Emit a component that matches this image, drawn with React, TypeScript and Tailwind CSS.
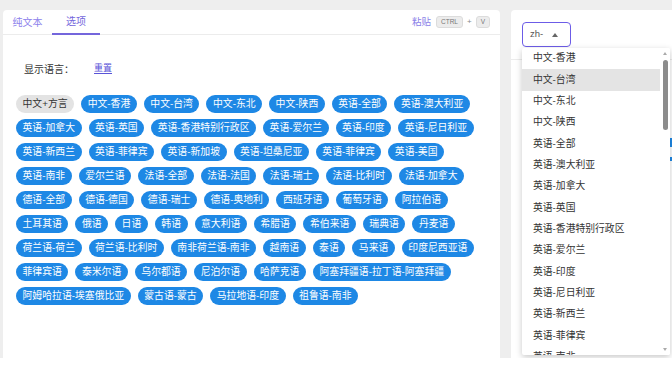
import React from 'react';

const rows: string[][] = [
  ['中文+方言', '中文-香港', '中文-台湾', '中文-东北', '中文-陕西', '英语-全部', '英语-澳大利亚'],
  ['英语-加拿大', '英语-英国', '英语-香港特别行政区', '英语-爱尔兰', '英语-印度', '英语-尼日利亚'],
  ['英语-新西兰', '英语-菲律宾', '英语-新加坡', '英语-坦桑尼亚', '英语-菲律宾', '英语-美国'],
  ['英语-南非', '爱尔兰语', '法语-全部', '法语-法国', '法语-瑞士', '法语-比利时', '法语-加拿大'],
  ['德语-全部', '德语-德国', '德语-瑞士', '德语-奥地利', '西班牙语', '葡萄牙语', '阿拉伯语'],
  ['土耳其语', '俄语', '日语', '韩语', '意大利语', '希腊语', '希伯来语', '瑞典语', '丹麦语'],
  ['荷兰语-荷兰', '荷兰语-比利时', '南非荷兰语-南非', '越南语', '泰语', '马来语', '印度尼西亚语'],
  ['菲律宾语', '泰米尔语', '乌尔都语', '尼泊尔语', '哈萨克语', '阿塞拜疆语-拉丁语-阿塞拜疆'],
  ['阿姆哈拉语-埃塞俄比亚', '蒙古语-蒙古', '马拉地语-印度', '祖鲁语-南非'],
];

const options = [
  '中文-香港', '中文-台湾', '中文-东北', '中文-陕西', '英语-全部', '英语-澳大利亚', '英语-加拿大',
  '英语-英国', '英语-香港特别行政区', '英语-爱尔兰', '英语-印度', '英语-尼日利亚', '英语-新西兰',
  '英语-菲律宾', '英语-南非',
];

function Kbd({ children }: { children: React.ReactNode }) {
  return (
    <span className="h-[12px] px-[4px] flex items-center rounded-[3px] bg-[#ececec] border border-[#dcdcdc] text-[6.5px] text-[#777] leading-none">
      {children}
    </span>
  );
}

export default function App() {
  return (
    <div className="h-[358px] w-[672px] overflow-hidden bg-[#eeeeee] flex pl-[3px] pt-[10px] gap-[11px] font-['Liberation_Sans','Noto_Sans_CJK_SC',sans-serif]">
      {/* left card */}
      <div className="w-[497px] shrink-0 bg-white rounded-t-[4px] flex flex-col">
        <div className="h-[25px] border-b border-[#ececec] flex items-stretch justify-between pr-[10px]">
          <div className="flex items-stretch">
            <div className="w-[49px] flex items-center justify-center text-[10px] text-[#8d82ec]">纯文本</div>
            <div className="w-[48px] flex items-center justify-center text-[10px] text-[#7466dc] border-b-2 border-[#7466dc] -mb-px">
              选项
            </div>
          </div>
          <div className="flex items-center gap-[4px]">
            <span className="text-[9.5px] text-[#8a7fe8] mr-[1px]">粘贴</span>
            <Kbd>CTRL</Kbd>
            <span className="text-[8px] text-[#888]">+</span>
            <Kbd>V</Kbd>
          </div>
        </div>

        <div className="px-[13px]">
          <div className="mt-[27px] h-[14px] flex items-center pl-[8px]">
            <span className="text-[10px] text-[#333]">显示语言：</span>
            <span className="ml-[20px] text-[9px] text-[#5a54d8] underline underline-offset-2">重置</span>
          </div>

          <div className="mt-[19px] flex flex-col gap-[6px]">
            {rows.map((row, i) => (
              <div key={i} className="flex gap-[7px]">
                {row.map((label, j) => {
                  const plain = i === 0 && j === 0;
                  return (
                    <span
                      key={j}
                      className={
                        plain
                          ? 'h-[18px] px-[6.5px] flex items-center rounded-full bg-[#e3e3e3] text-[#333] text-[9.85px] whitespace-nowrap'
                          : 'h-[18px] px-[6.5px] flex items-center rounded-full bg-[#1e88e5] text-white text-[9.85px] whitespace-nowrap'
                      }
                    >
                      {label}
                    </span>
                  );
                })}
              </div>
            ))}
          </div>
        </div>
      </div>

      {/* right card */}
      <div className="flex-1 bg-white rounded-tl-[4px] relative">
        <div className="h-[50px] border-b border-[#ececec] pt-[12px] pl-[11px]">
          <div className="w-[49px] h-[25px] border-[1.5px] border-[#6c5ce7] rounded-[4px] flex items-center pl-[7px]">
            <span className="text-[9.5px] text-[#555]">zh-</span>
            <span className="ml-[9px] w-0 h-0 border-l-[3px] border-r-[3px] border-b-[4px] border-l-transparent border-r-transparent border-b-[#666]" />
          </div>
        </div>

        <div className="absolute left-[158px] top-[128px] w-[4px] h-[9px] bg-[#1e88e5]" />
        <div className="absolute left-[158px] top-[147px] w-[4px] h-[4px] bg-[#1e88e5]" />

        {/* dropdown */}
        <div className="absolute left-[11px] top-[38px] w-[148px] h-[307px] bg-white overflow-hidden rounded-[2px] shadow-[0_2px_6px_rgba(0,0,0,0.22)]">
          {options.map((o, i) => (
            <div
              key={i}
              className={
                i === 1
                  ? 'h-[21.33px] flex items-center pl-[11px] pr-[12px] text-[9.8px] text-[#333] bg-[#e4e4e4]'
                  : 'h-[21.33px] flex items-center pl-[11px] pr-[12px] text-[9.8px] text-[#333]'
              }
            >
              {o}
            </div>
          ))}

          {/* scrollbar */}
          <div className="absolute right-0 top-0 bottom-0 w-[10px] bg-white flex flex-col items-center">
            <span className="mt-[4px] w-0 h-0 border-l-[2.5px] border-r-[2.5px] border-b-[3px] border-l-transparent border-r-transparent border-b-[#aaa]" />
            <span className="mt-[5px] w-[5px] h-[70px] rounded-full bg-[#8c8c8c]" />
            <span className="mt-auto mb-[4px] w-0 h-0 border-l-[2.5px] border-r-[2.5px] border-t-[3px] border-l-transparent border-r-transparent border-t-[#aaa]" />
          </div>
        </div>
      </div>
    </div>
  );
}
